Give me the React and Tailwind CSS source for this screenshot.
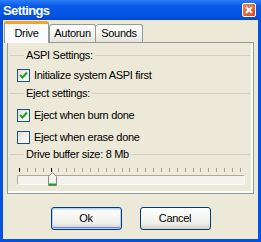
import React from "react";

const font = { fontFamily: "Tahoma, 'Liberation Sans', 'DejaVu Sans', sans-serif" };

const GroupHeader = ({ label }) => (
  <div className="flex h-[13px] items-center pl-[2px] pr-[3px]">
    <div className="h-px w-[14px] bg-[#D0D0BF]" />
    <span className="px-[2px] leading-[13px]">{label}</span>
    <div className="h-px flex-1 bg-[#D0D0BF]" />
  </div>
);

const Checkbox = ({ checked, label, className = "" }) => (
  <div className={`flex h-[13px] items-center pl-[9px] ${className}`}>
    <div className="flex h-[13px] w-[13px] items-center justify-center border border-[#1C5180] bg-[linear-gradient(135deg,#DCDCD7,#F6F6F3_70%,#FFFFFF)]">
      {checked && (
        <svg width="9" height="9" viewBox="0 0 9 9">
          <path d="M1 4 L3.5 6.5 L8 1.5" stroke="#21A121" strokeWidth="2" fill="none" />
        </svg>
      )}
    </div>
    <span className="ml-[4px] leading-[13px]">{label}</span>
  </div>
);

const ticks = Array.from({ length: 29 }, (_, i) => i);

export default function App() {
  return (
    <div
      style={font}
      className="flex h-[242px] w-[261px] flex-col bg-[#0551E0] text-[11px] tracking-[-0.3px] text-black"
    >
      {/* title bar */}
      <div className="flex h-[20px] items-center justify-between bg-[linear-gradient(#2E7DF7,#0A5AE8_30%,#0052E0_80%,#0047D0)] pl-[3px] pr-[5px]">
        <span className="text-[13px] font-bold leading-none tracking-[-0.6px] text-white">Settings</span>
        <div className="flex h-[14px] w-[14px] items-center justify-center rounded-[2px] border border-white bg-[linear-gradient(135deg,#F08A5E,#D5481F)]">
          <svg width="8" height="8" viewBox="0 0 8 8">
            <path d="M1 1 L7 7 M7 1 L1 7" stroke="white" strokeWidth="2" />
          </svg>
        </div>
      </div>

      {/* body */}
      <div className="mx-[3px] mb-[3px] flex flex-1 flex-col bg-[#ECE9D8] px-[1px]">
        {/* tabs */}
        <div className="relative z-10 flex h-[22px] items-end">
          <div className="mb-[-1px] flex h-[22px] w-[45px] items-start justify-center rounded-t-[3px] border-x border-[#919B9C] border-t-[3px] border-t-[#F1A22F] bg-[#FCFCFE] pt-[3px]">
            <span className="leading-[13px]">Drive</span>
          </div>
          <div className="flex h-[18px] w-[47px] items-center justify-center rounded-t-[3px] border border-b-0 border-[#919B9C] bg-[linear-gradient(#FFFFFF,#F3F2EC_60%,#E5E3DA)]">
            Autorun
          </div>
          <div className="flex h-[18px] w-[47px] items-center justify-center rounded-t-[3px] border border-b-0 border-l-0 border-[#919B9C] bg-[linear-gradient(#FFFFFF,#F3F2EC_60%,#E5E3DA)]">
            Sounds
          </div>
        </div>

        {/* panel */}
        <div className="mx-[3px] flex h-[152px] flex-col border border-[#919B9C] bg-[#ECE9D8] pt-[6px] shadow-[inset_-2px_-2px_0_#FCFCFA]">
          <GroupHeader label="ASPI Settings:" />
          <Checkbox checked label="Initialize system ASPI first" className="mt-[7px]" />
          <div className="mt-[5px]">
            <GroupHeader label="Eject settings:" />
          </div>
          <Checkbox checked label="Eject when burn done" className="mt-[9px]" />
          <Checkbox label="Eject when erase done" className="mt-[9px]" />
          <div className="mt-[4px]">
            <GroupHeader label="Drive buffer size: 8 Mb" />
          </div>

          {/* slider */}
          <div className="relative mt-[7px]">
            <div className="ml-[11px] flex h-[4px] w-[222px] justify-between">
              {ticks.map((i) => (
                <div
                  key={i}
                  className={`h-[4px] w-px ${i === 0 || i === 4 ? "bg-black" : "bg-[#A0A0A0]"}`}
                />
              ))}
            </div>
            <div className="ml-[9px] mt-[3px] h-[10px] w-[228px] rounded-[2px] border border-[#A9A99E] border-b-white border-r-white bg-[#F3F2EC]" />
            <svg
              className="absolute left-[40px] top-[4px]"
              width="9"
              height="14"
              viewBox="0 0 9 14"
            >
              <path d="M0.5 13.5 V4.5 L4.5 0.5 L8.5 4.5 V13.5 Z" fill="#F5F4EE" stroke="#8A8A80" />
              <path d="M1 12.5 H8" stroke="#21A121" strokeWidth="2" />
            </svg>
          </div>
        </div>

        {/* buttons */}
        <div className="mt-[13px] flex justify-center gap-[18px]">
          <button className="h-[23px] w-[71px] rounded-[3px] border border-[#003C74] bg-[linear-gradient(#FFFFFF,#F0F0EA_70%,#D6D0C5)] shadow-[inset_0_0_0_1px_#B8D0F8,inset_0_-2px_0_#6982EE,inset_0_2px_0_#CEE7FF]">
            Ok
          </button>
          <button className="h-[23px] w-[71px] rounded-[3px] border border-[#003C74] bg-[linear-gradient(#FFFFFF,#F0F0EA_70%,#D6D0C5)]">
            Cancel
          </button>
        </div>
      </div>
    </div>
  );
}
